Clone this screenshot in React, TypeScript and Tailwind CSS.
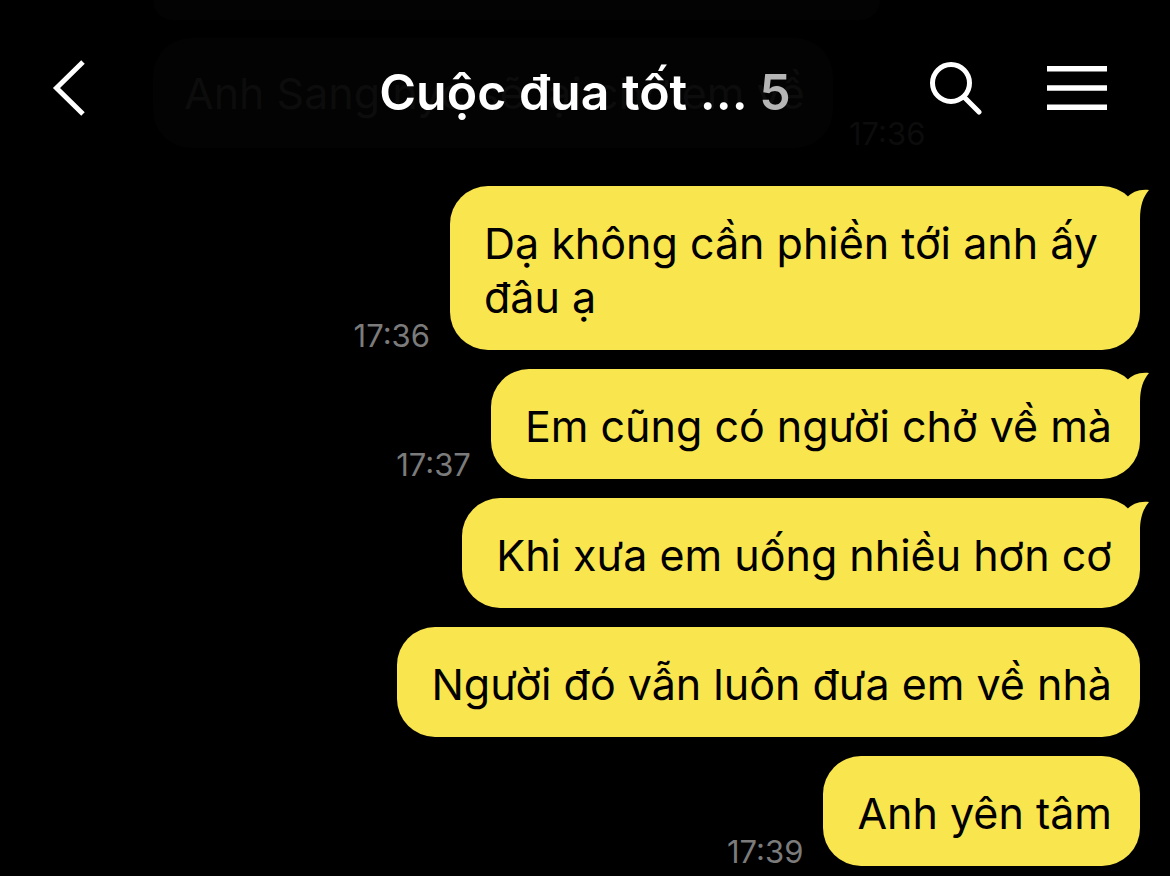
import clsx from 'clsx';

type Message = { text: string; time?: string; tail?: boolean; wrapped?: boolean };

const sent: Message[] = [
  { text: 'Dạ không cần phiền tới anh ấy đâu ạ', time: '17:36', tail: true, wrapped: true },
  { text: 'Em cũng có người chở về mà', time: '17:37', tail: true },
  { text: 'Khi xưa em uống nhiều hơn cơ', tail: true },
  { text: 'Người đó vẫn luôn đưa em về nhà' },
  { text: 'Anh yên tâm', time: '17:39' },
];

function Tail() {
  return (
    <svg
      viewBox="0 0 24 40"
      className="absolute -right-[9px] top-[3px] h-10 w-6 fill-[#f9e54e]"
      aria-hidden="true"
    >
      <path d="M2 8.500C7 3 14 0 24 1C18 8 15 17 15 30L15 40L6 24Z" />
    </svg>
  );
}

function SentMessage({ text, time, tail, wrapped }: Message) {
  return (
    <li className="flex items-end justify-end gap-5">
      {time && <time className="text-[31px] leading-[28px] text-[#7b7b7b]">{time}</time>}
      <p
        className={clsx(
          'relative rounded-[38px] bg-[#f9e54e] pb-[26px] pl-[34px] pr-7 pt-[30px] text-[43px] leading-[54px] text-black',
          wrapped ? 'w-[690px]' : 'max-w-[760px]',
        )}
      >
        {text}
        {tail && <Tail />}
      </p>
    </li>
  );
}

/** Older messages, almost hidden behind the dimmed title bar. */
function DimmedHistory() {
  return (
    <ul className="flex flex-col items-start gap-[18px] pl-[153px] text-[43px] leading-[54px] text-[#0c0c0c]">
      <li className="h-5 w-[727px] rounded-b-[38px] bg-[#030303]" />
      <li className="flex items-end gap-4">
        <p className="w-[680px] whitespace-nowrap rounded-[38px] bg-[#030303] py-7 pl-[31px]">
          Anh Sang nyc sẽ lại chở em về
        </p>
        <time className="text-[31px] leading-[28px]">17:36</time>
      </li>
    </ul>
  );
}

export default function App() {
  return (
    <div className="relative min-h-screen overflow-hidden bg-black font-['Inter',sans-serif]">
      <header className="absolute inset-x-0 top-0 z-10 grid grid-cols-[1fr_auto_1fr] items-center px-[50px] py-[54px] text-white">
        <button type="button" aria-label="Back" className="justify-self-start">
          <svg viewBox="0 0 40 60" className="h-[60px] w-10" fill="none" stroke="currentColor" strokeWidth="5">
            <path d="M33 4L6.500 30L33 56" />
          </svg>
        </button>
        <h1 className="whitespace-nowrap pt-2 text-[50px] font-semibold leading-[60px]">
          Cuộc đua tốt ... <span className="text-[#b5b5b5]">5</span>
        </h1>
        <div className="flex items-center justify-end gap-16 pr-[13px]">
          <button type="button" aria-label="Search">
            <svg viewBox="0 0 54 54" className="size-[54px]" fill="none" stroke="currentColor" strokeWidth="5">
              <circle cx="22" cy="22" r="18.500" />
              <path d="M35.500 36.500L50 51" strokeLinecap="round" />
            </svg>
          </button>
          <button type="button" aria-label="Menu">
            <svg viewBox="0 0 60 44" className="h-11 w-[60px]" fill="none" stroke="currentColor" strokeWidth="5.500">
              <path d="M0 2.800H60M0 22H60M0 41.200H60" />
            </svg>
          </button>
        </div>
      </header>

      <main>
        <DimmedHistory />
        <ul className="mt-[38px] flex flex-col gap-[19px] pb-[10px] pr-[30px]">
          {sent.map((message) => (
            <SentMessage key={message.text} {...message} />
          ))}
        </ul>
      </main>
    </div>
  );
}
